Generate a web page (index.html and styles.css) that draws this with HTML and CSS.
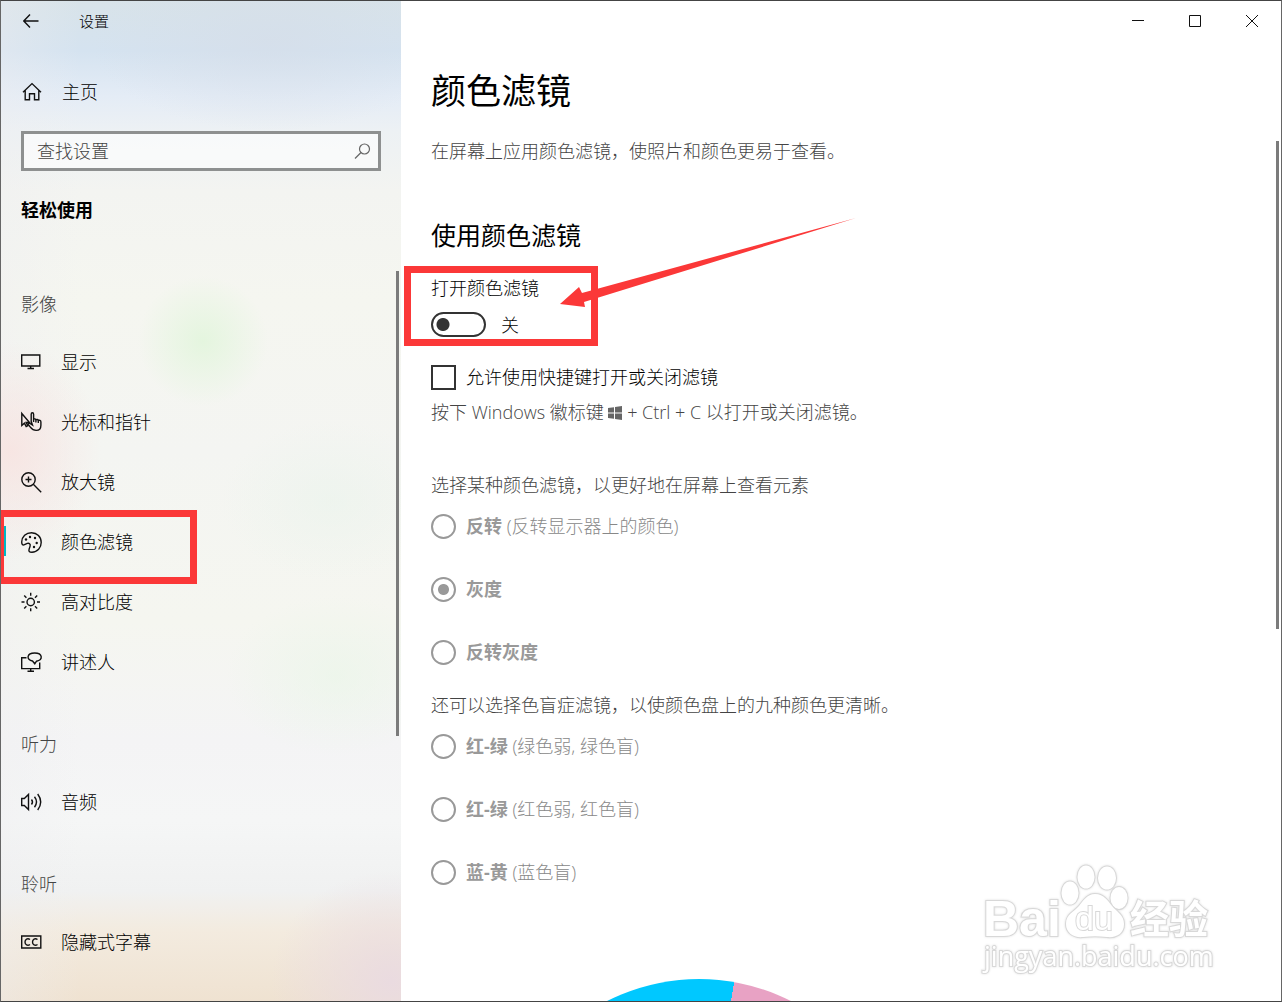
FILE: index.html
```html
<!DOCTYPE html>
<html lang="zh-CN">
<head>
<meta charset="utf-8">
<title>设置</title>
<meta name="viewport" content="width=device-width, initial-scale=1">
<link rel="stylesheet" href="styles.css">
</head>
<body>
<div class="window">
  <aside class="sidebar">
    <header class="titlebar">
      <button class="back" type="button" aria-label="返回">
        <svg width="16" height="14" viewBox="0 0 16 14"><path d="M7 .5.8 7 7 13.500M.8 7H15.500"/></svg>
      </button>
      <span class="app-name">设置</span>
    </header>
    <a class="home" href="#home">
      <svg width="20" height="20" viewBox="0 0 20 20"><path d="M1 10.200 10 1.600l9 8.600M3.200 8.500v9.300h4.300v-6h5v6h4.300V8.500"/></svg>
      <span>主页</span>
    </a>
    <form class="search">
      <input type="search" placeholder="查找设置" aria-label="查找设置">
      <svg width="18" height="18" viewBox="0 0 18 18"><circle cx="11.500" cy="7" r="5"/><path d="M8 10.500 2 16.500"/></svg>
    </form>
    <h2 class="category">轻松使用</h2>
    <nav class="nav">
      <h3>影像</h3>
      <a href="#display"><svg width="20" height="20" viewBox="0 0 20 20"><path d="M.7 3h18.100v11H.7zM9.700 14v2.500M6.500 16.500h6.500"/></svg><span>显示</span></a>
      <a href="#cursor"><svg width="21" height="20" viewBox="0 0 21 20"><path d="M.8 1.500v12l2.600-2.300 1.800 3.300 1.600-.8-1.700-3.300h3.200z"/><path d="M10.200 9.500V2.200c0-1.900 2.400-1.900 2.400 0v5.300c.5-1 2.200-.7 2.300.4.700-.8 2.200-.5 2.400.6 1-.5 2.600-.1 2.600 1.400v3.300c0 3.200-1.500 5.200-4.700 5.200-4.600 0-5-2.800-8.400-6.300l1-1.400 3.700 2.300zM12.600 7.500V10M14.900 8v2.500M17.300 8.500v2.500"/></svg><span>光标和指针</span></a>
      <a href="#magnifier"><svg width="21" height="21" viewBox="0 0 21 21"><circle cx="7.500" cy="7.500" r="6.700"/><path d="M12.300 12.300 20.200 20.200M7.500 4.500v6M4.500 7.500h6"/></svg><span>放大镜</span></a>
      <a href="#filters" class="current" aria-current="page"><svg width="21" height="21" viewBox="0 0 21 21"><path d="M10.500.7c5.600 0 9.700 4 9.700 9.800 0 5.200-3.700 9.700-9.300 9.700-2.700 0-3.400-1-2.800-3l1-3.100c.6-2-1-3.300-2.800-2.700l-2.800 1.300C1.500 13.600.7 12 .7 10 .9 4.700 5 .7 10.500.7z"/><g class="dots"><circle cx="5" cy="7.500" r="1.200"/><circle cx="9" cy="5" r="1.200"/><circle cx="14" cy="6" r="1.200"/><circle cx="15.700" cy="11" r="1.200"/><circle cx="13" cy="15" r="1.200"/></g></svg><span>颜色滤镜</span></a>
      <a href="#contrast"><svg width="20" height="20" viewBox="0 0 20 20"><circle cx="9.700" cy="10" r="3.700"/><path d="M9.700.8v3M9.700 16.200v3M.5 10h3M16 10h3M3.200 3.500l2.200 2.200M14 14.300l2.200 2.200M16.200 3.500 14 5.700M5.400 14.300l-2.200 2.200"/></svg><span>高对比度</span></a>
      <a href="#narrator"><svg width="21" height="21" viewBox="0 0 21 21"><path d="M5.500 5.700H.7v10.900h18v-6M9.700 16.500v2.700M6.500 19.200H13M11.500 9c-6.500-1-6-8 2.200-8 8.200 0 8.500 7 1.800 8.200l-1.700 2.600z"/></svg><span>讲述人</span></a>
      <h3>听力</h3>
      <a href="#audio"><svg width="21" height="20" viewBox="0 0 21 20"><path d="M.7 6.500h2.600l4.200-4v15l-4.200-4H.7zM10.500 7.500q2 2.500 0 5M13.500 4.800q4 5.200 0 10.400M16.700 2q6 8 0 16"/></svg><span>音频</span></a>
      <h3>聆听</h3>
      <a href="#captions"><svg width="21" height="20" viewBox="0 0 21 20"><path d="M.7 4h19.100v12H.7zM9 7.500C6.500 5.800 4 7.300 4 10s2.500 4.200 5 2.500M16.500 7.500c-2.500-1.700-5-.2-5 2.500s2.500 4.200 5 2.500"/></svg><span>隐藏式字幕</span></a>
    </nav>
    <div class="thumb"></div>
  </aside>

  <main class="main">
    <div class="titlebar controls">
      <button type="button" aria-label="最小化"><svg width="12" height="12" viewBox="0 0 12 12"><path d="M0 5.500h12"/></svg></button>
      <button type="button" aria-label="最大化"><svg width="12" height="12" viewBox="0 0 12 12"><path d="M.5.500h11v11H.5z"/></svg></button>
      <button type="button" aria-label="关闭"><svg width="12" height="12" viewBox="0 0 12 12"><path d="m0 0 12 12M12 0 0 12"/></svg></button>
    </div>
    <div class="content">
      <h1>颜色滤镜</h1>
      <p class="intro">在屏幕上应用颜色滤镜，使照片和颜色更易于查看。</p>
      <h2>使用颜色滤镜</h2>
      <div class="setting">
        <label for="filter-switch">打开颜色滤镜</label>
        <div class="switch-row"><input class="switch" id="filter-switch" type="checkbox" role="switch"><span>关</span></div>
      </div>
      <label class="option shortcut"><input type="checkbox"><span>允许使用快捷键打开或关闭滤镜</span></label>
      <p class="hint">按下 Windows 徽标键 <svg class="logo" width="14" height="14" viewBox="0 0 14 14"><path d="M0 2l6-.8v5.300H0zM7 1l7-1v6.500H7zM0 7.500h6v5.300L0 12zM7 7.500h7V14l-7-1z"/></svg> + Ctrl + C 以打开或关闭滤镜。</p>
      <p class="prompt">选择某种颜色滤镜，以更好地在屏幕上查看元素</p>
      <div class="radios">
        <label class="option"><input type="radio" name="filter" disabled><span><b>反转</b> (反转显示器上的颜色)</span></label>
        <label class="option"><input type="radio" name="filter" checked disabled><span><b>灰度</b></span></label>
        <label class="option"><input type="radio" name="filter" disabled><span><b>反转灰度</b></span></label>
      </div>
      <p class="prompt second">还可以选择色盲症滤镜，以使颜色盘上的九种颜色更清晰。</p>
      <div class="radios">
        <label class="option"><input type="radio" name="filter" disabled><span><b>红-绿</b> (绿色弱, 绿色盲)</span></label>
        <label class="option"><input type="radio" name="filter" disabled><span><b>红-绿</b> (红色弱, 红色盲)</span></label>
        <label class="option"><input type="radio" name="filter" disabled><span><b>蓝-黄</b> (蓝色盲)</span></label>
      </div>
      <div class="wheel"></div>
    </div>
    <svg class="arrow" width="300" height="94" viewBox="0 0 300 94"><path d="M0 88 19 71 22 77 296 2 24 86 25 91z"/></svg>
    <svg class="watermark" width="236" height="116" viewBox="0 0 236 116">
      <g><ellipse cx="90" cy="30" rx="8.500" ry="11.500"/><ellipse cx="106" cy="14" rx="8.500" ry="11.500"/><ellipse cx="127" cy="15" rx="9" ry="11.500"/><ellipse cx="139" cy="35" rx="8.500" ry="11"/><path d="M115 31c9 0 13 7 17 12 5 6 12 9 12 18 0 10-8 14-17 13-8-1-16-1-24 0-9 1-17-4-17-13 0-10 8-12 13-18 4-5 8-12 16-12z"/></g>
      <text class="brand" x="3" y="73">Bai</text>
      <text class="du" x="95" y="67">du</text>
      <text class="cn" x="150" y="70">经验</text>
      <text class="url" x="4" y="103">jingyan.baidu.com</text>
    </svg>
    <div class="thumb"></div>
  </main>
</div>
</body>
</html>
```
FILE: styles.css
```css
*, ::before, ::after { box-sizing: border-box; }

body {
  margin: 0;
  font: 300 18px/24px "Open Sans", "Noto Sans CJK SC", sans-serif;
  color: #000;
}

h1, h2, h3, p { margin: 0; font-weight: 300; }
a { color: inherit; text-decoration: none; }
svg { fill: none; stroke: #111; stroke-width: 1.4; flex: none; }

button {
  display: grid;
  place-items: center;
  height: 40px;
  padding: 0;
  border: 0;
  background: none;
}

.window {
  display: flex;
  height: 100vh;
  overflow: hidden;
  background: #fff;
  border: 1px solid #666;
  border-top-color: #444;
  border-bottom-color: #444;
}

/* Sidebar */
.sidebar {
  position: relative;
  flex: none;
  width: 400px;
  background:
    radial-gradient(circle at 202px 340px, #e0f5dacc 0, #e6f6e000 65px),
    radial-gradient(ellipse 90px 110px at 10px 450px, #f8e2dfcc 0, #f8e8e200 100%),
    radial-gradient(ellipse 110px 80px at 330px 500px, #e9f3eb90 0, #e9f3eb00 100%),
    radial-gradient(ellipse 110px 80px at 335px 675px, #e8f6e690 0, #e8f6e600 100%),
    radial-gradient(ellipse 120px 110px at 390px 980px, #eadbe0 0, #eadbe000 100%),
    radial-gradient(ellipse 180px 90px at 270px 40px, #d5dde8a0 0, #d5dde800 100%),
    linear-gradient(90deg, #eeeef060 0, #eeeef000 80px),
    linear-gradient(#d8e3e9 0, #d5e3f0 50px, #e4ecf6 95px, #edf1f4 130px, #f3f4f1 190px, #f5f6f0 300px, #f4f5f2 450px, #f5f6f0 620px, #f4f4f5 740px, #f5f6f6 820px, #f0f1f1 890px, #f3ebdf 930px, #efe2d1 100%);
}

.titlebar { display: flex; align-items: center; height: 40px; }
.back { width: 60px; }
.app-name { margin-left: 18px; font-size: 15px; }

.home {
  display: flex;
  align-items: center;
  gap: 20px;
  height: 50px;
  margin-top: 26px;
  padding-left: 21px;
}

.search {
  display: flex;
  align-items: center;
  height: 40px;
  margin: 14px 20px 0;
  padding: 0 7px 0 13px;
  border: 3px solid #8e9090;
  background: #ffffff99;
}
.search input {
  flex: 1;
  min-width: 0;
  padding: 0;
  border: 0;
  outline: 0;
  background: none;
  font: inherit;
}
.search input::placeholder { color: #444; opacity: 1; }
.search svg { stroke: #666; stroke-width: 1.2; }

.category {
  margin: 24px 20px 27px;
  font-size: 18px;
  line-height: 30px;
  font-weight: 700;
}

.nav h3 {
  padding: 38px 20px 14px;
  font-size: 18px;
  line-height: 28px;
  color: #444;
}
.nav a {
  position: relative;
  display: flex;
  align-items: center;
  height: 60px;
  padding-left: 20px;
}
.nav svg { overflow: visible; }
.nav a span { padding-left: 19px; }
.nav svg[width="20"] + span { padding-left: 20px; }
.dots { fill: #111; stroke: none; }

.current::before {
  content: "";
  position: absolute;
  top: 14px;
  left: 0;
  width: 5px;
  height: 30px;
  background: #00b7c3;
}
.current::after {
  content: "";
  position: absolute;
  top: -2px;
  left: -4px;
  width: 200px;
  height: 74px;
  border: 7px solid #fb3838;
}

.thumb { position: absolute; width: 3px; background: #7b7b7b; }
.sidebar .thumb { top: 270px; right: 2px; height: 465px; }
.main .thumb { top: 140px; right: 2px; height: 488px; }

/* Main pane */
.main { position: relative; flex: 1; min-width: 0; }
.controls { justify-content: flex-end; padding-right: 1px; }
.controls button { width: 57px; }
.controls svg { stroke-width: 1; }

.content { padding: 25px 30px 0; }
h1 { font-size: 35px; line-height: 50px; font-weight: 400; }
.intro { margin-top: 23px; color: #444; }
.content h2 { margin-top: 55px; font-size: 25px; line-height: 34px; font-weight: 400; }

.setting { position: relative; margin-top: 24px; }
.setting label { display: block; }
.setting::after {
  content: "";
  position: absolute;
  top: -10px;
  left: -27px;
  width: 194px;
  height: 80px;
  border: 7px solid #fb3838;
  pointer-events: none;
}
.switch-row { display: flex; align-items: center; gap: 15px; height: 25px; margin-top: 12px; }

input[type="checkbox"], input[type="radio"] {
  appearance: none;
  flex: none;
  width: 25px;
  height: 25px;
  margin: 0;
  border: 2px solid #333;
  background: #fff;
}
input.switch {
  width: 55px;
  border-radius: 13px;
  background: radial-gradient(circle at 10px 50%, #333 6px, #fff 7px);
}
input[type="radio"] { border-color: #999; border-radius: 50%; }
input[type="radio"]:checked { background: radial-gradient(circle, #999 5px, #fff 6px); }

.option { display: flex; align-items: center; gap: 10px; width: fit-content; height: 26px; }
.shortcut { margin-top: 27px; }
.hint { margin-top: 10px; color: #444; }
.logo { fill: #666; stroke: none; vertical-align: -1px; }
.prompt { margin-top: 49px; color: #444; }
.prompt.second { margin-top: 28px; }
.radios { display: grid; gap: 37px; margin-top: 16px; color: #888; }
b { font-weight: 700; color: #999; }

.wheel {
  width: 406px;
  height: 406px;
  margin: 94px 0 0 65px;
  border-radius: 50%;
  background: conic-gradient(from -30deg, #00c8ff 40deg, #e8a2c4 40deg 80deg, #8e5bb5 80deg 120deg, #e83f3f 120deg 160deg, #f58a2d 160deg 200deg, #f5d63d 200deg 240deg, #78c043 240deg 280deg, #1e9b63 280deg 320deg, #2864c8 320deg);
}

.arrow { position: absolute; top: 215px; left: 159px; fill: #fb3838; stroke: none; }

.watermark { position: absolute; right: 65px; bottom: 22px; fill: #fff; stroke: #d8d8d8; stroke-width: 2; paint-order: stroke; filter: drop-shadow(0 0 1px #ddd); }
.brand { font: 700 50px "Liberation Sans", sans-serif; }
.du { font: 400 34px "Liberation Sans", sans-serif; }
.cn { font: 700 39px "Noto Sans CJK SC", sans-serif; }
.url { font: 400 27px "Open Sans", sans-serif; }
```
